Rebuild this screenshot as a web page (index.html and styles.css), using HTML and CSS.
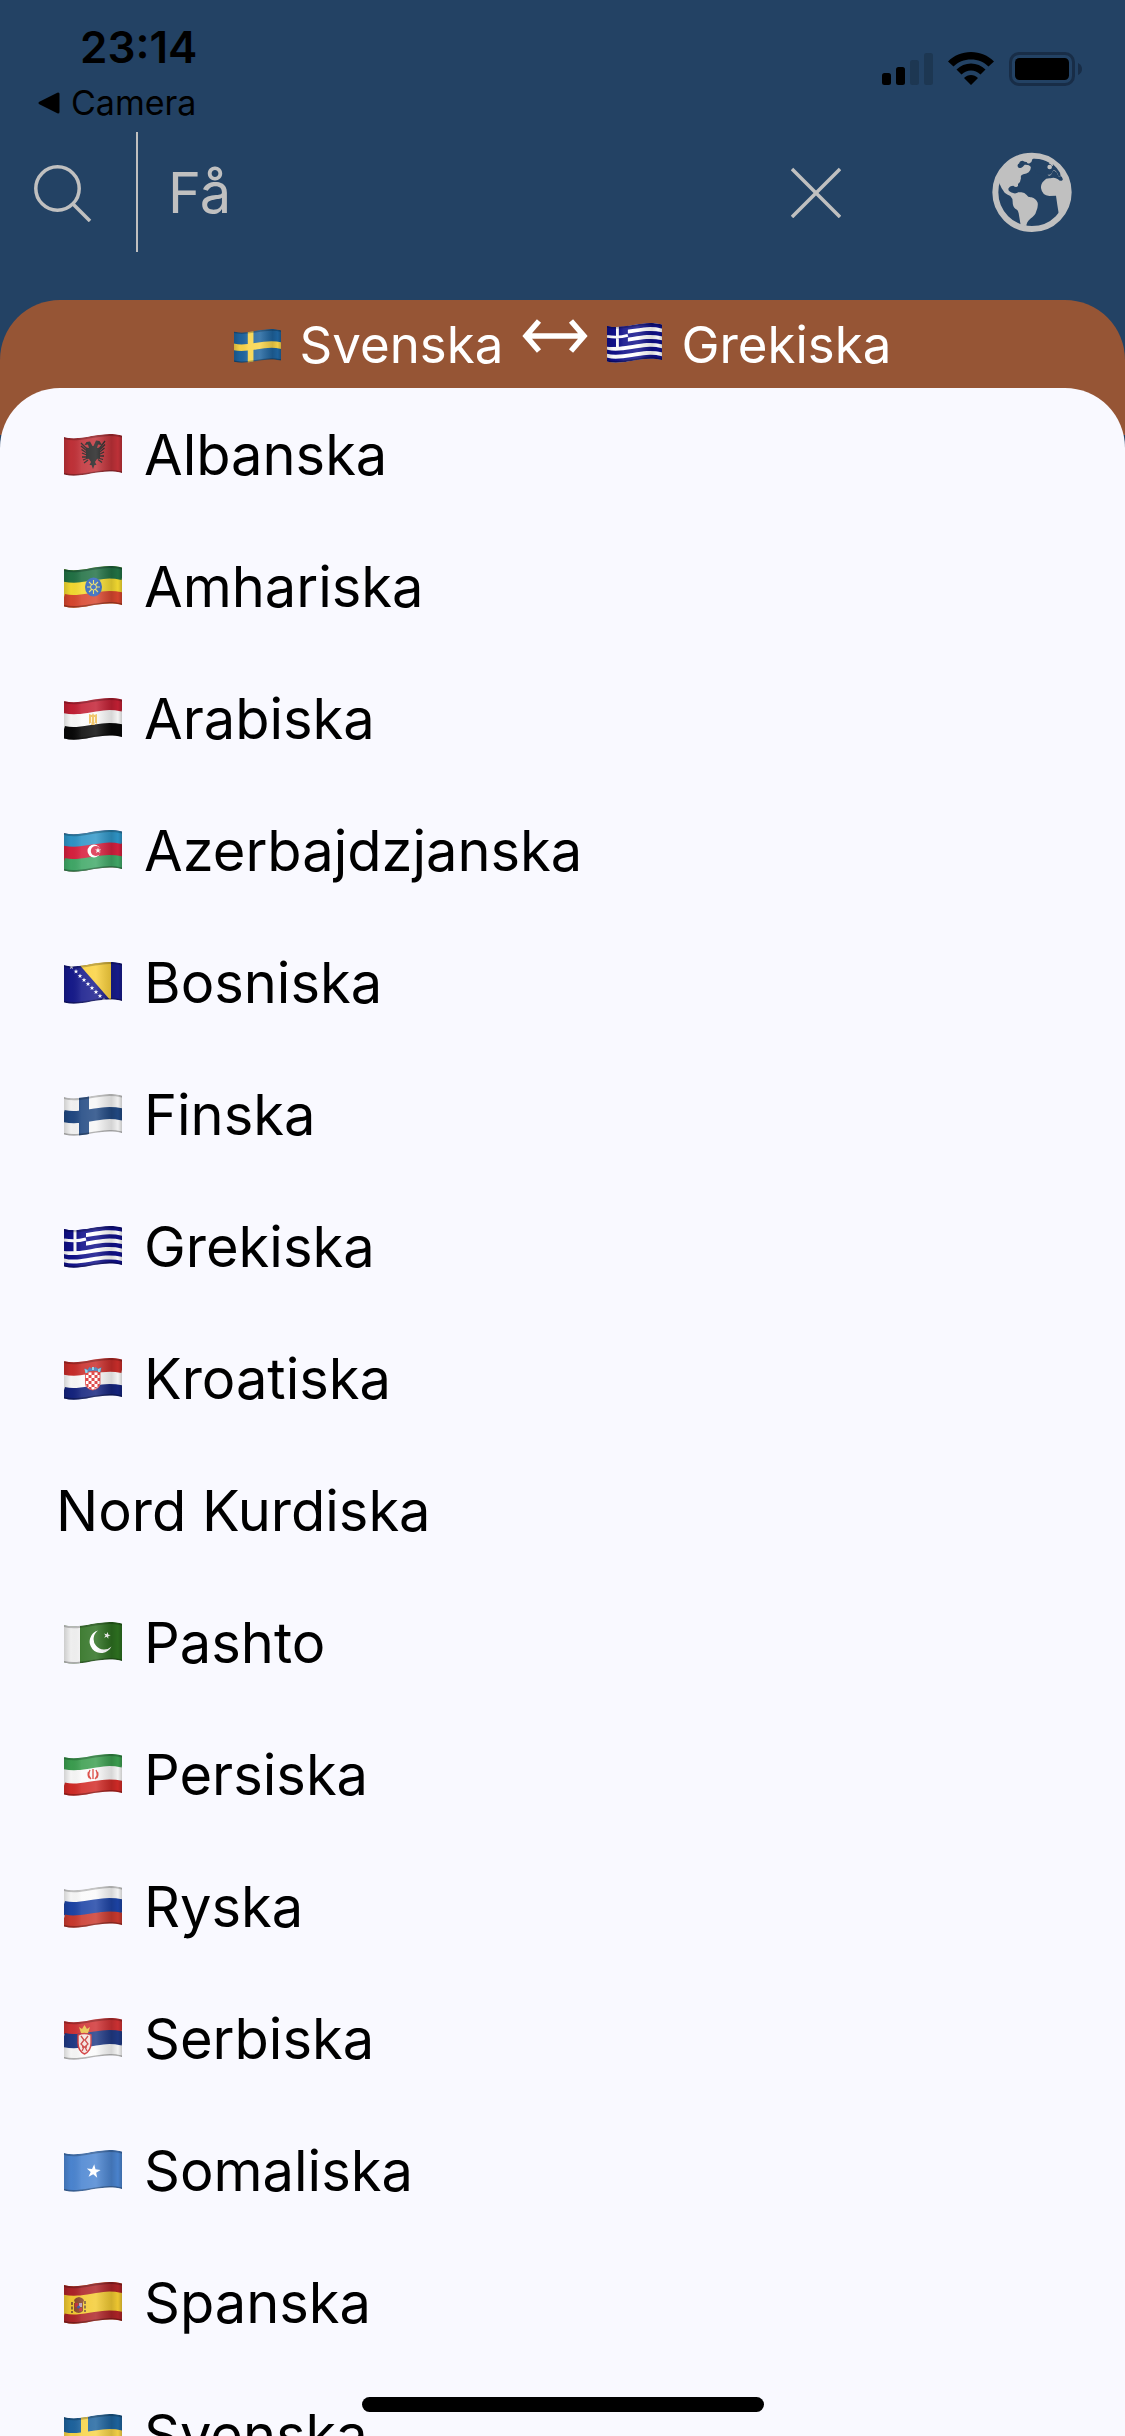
FILE: index.html
```html
<!DOCTYPE html>
<html lang="sv">
<head>
<meta charset="utf-8">
<meta name="viewport" content="width=device-width, initial-scale=1">
<title>Lexikon</title>
<link rel="stylesheet" href="styles.css">
</head>
<body>
<svg class="defs" aria-hidden="true">
  <defs>
    <path id="cloth" d="M0 3C18 8 36 -4 58 1.500V39C36 33.500 18 45.500 0 40.500Z"/>
    <clipPath id="clip"><use href="#cloth"/></clipPath>
    <path id="wave" d="M-1 2.700L0 3C18 8 36 -4 58 1.500L59 1.700" fill="none"/>
    <linearGradient id="fold">
      <stop offset="0" stop-color="#000" stop-opacity=".16"/>
      <stop offset=".12" stop-color="#000" stop-opacity=".02"/>
      <stop offset=".3" stop-color="#fff" stop-opacity=".1"/>
      <stop offset=".55" stop-color="#fff" stop-opacity=".16"/>
      <stop offset=".82" stop-color="#000" stop-opacity=".14"/>
      <stop offset=".93" stop-color="#000" stop-opacity=".03"/>
      <stop offset="1" stop-color="#000" stop-opacity=".2"/>
    </linearGradient>
    <g id="shade">
      <use href="#cloth" fill="url(#fold)"/>
      <use href="#wave" y="1" stroke="#000" stroke-opacity=".22" stroke-width="2"/>
      <use href="#wave" y="37" stroke="#000" stroke-opacity=".28" stroke-width="2"/>
    </g>
    <path id="star" d="M0 -5L1.200 -1.600H4.800L1.900 .6L3 4L0 1.900L-3 4L-1.900 .6L-4.800 -1.600H-1.200Z"/>

    <symbol id="al" viewBox="0 0 58 42"><g clip-path="url(#clip)">
      <use href="#cloth" fill="#c23239"/>
      <path fill="#222" d="M28.500 12L26 7.500L22.500 8L20.500 11L24 10.500L25 14L22 13.500V24L25 25L27 28L25.500 31L27.500 31L29 35L30.500 31L32.500 31L31 28L33 25L36 24V13.500L33 14L34 10.500L38 11L35.500 7L32 6.500L29.500 12Z"/>
      <path fill="none" stroke="#222" stroke-width="1.300" d="M17 9l6 6M17 12l6 5M17.500 15.500l6 4M18 19l6 2.500M18 23h6M19 26l5-2M20 29l4-3M41 7l-6 8M41 10.500l-6 6M40.500 14l-6 5M40 18l-6 3M40 22h-6M39 25.500l-5-1.500M38 28.500l-4-3"/>
      <use href="#shade"/></g></symbol>

    <symbol id="et" viewBox="0 0 58 42"><g clip-path="url(#clip)">
      <use href="#cloth" fill="#f5db31"/>
      <use href="#wave" y="5" stroke="#227245" stroke-width="15"/>
      <use href="#wave" y="32" stroke="#d9472f" stroke-width="14"/>
      <ellipse cx="29.500" cy="21" rx="8.500" ry="9.500" fill="#2c62bb"/>
      <path stroke="#e8dc5a" stroke-width="1.100" fill="none" d="M29.500 14v4M29.500 24v4M23 21h4M32 21h4M25 16l3 3M34 16l-3 3M25 26l3-3M34 26l-3-3"/>
      <circle cx="29.500" cy="21" r="3" fill="none" stroke="#e8dc5a"/>
      <use href="#shade"/></g></symbol>

    <symbol id="eg" viewBox="0 0 58 42"><g clip-path="url(#clip)">
      <use href="#cloth" fill="#fafafa"/>
      <use href="#wave" y="5" stroke="#c32034" stroke-width="14"/>
      <use href="#wave" y="32" stroke="#080808" stroke-width="14"/>
      <path fill="#efbd55" d="M25 16l3 1 1-2 1 2 3-1v10l-3-2 1 3h-4l1-3-3 2z"/>
      <path stroke="#fff" stroke-width=".8" fill="none" d="M27.500 19v5M30.500 19v5"/>
      <use href="#shade"/></g></symbol>

    <symbol id="az" viewBox="0 0 58 42"><g clip-path="url(#clip)">
      <use href="#cloth" fill="#d8213f"/>
      <use href="#wave" y="5" stroke="#2f96c8" stroke-width="15"/>
      <use href="#wave" y="32" stroke="#41a968" stroke-width="14"/>
      <circle cx="30" cy="21" r="6.500" fill="#fff"/><circle cx="31.800" cy="21" r="5" fill="#db2d49"/>
      <use href="#star" transform="translate(34 20.500) scale(.62)" fill="#fff"/>
      <use href="#shade"/></g></symbol>

    <symbol id="ba" viewBox="0 0 58 42"><g clip-path="url(#clip)">
      <use href="#cloth" fill="#171b8c"/>
      <path fill="#fad13c" d="M13 0H47V39Z"/>
      <g fill="#fff"><use href="#star" transform="translate(7.500 5) scale(.5)"/><use href="#star" transform="translate(12 9.500) scale(.5)"/><use href="#star" transform="translate(16 14) scale(.5)"/><use href="#star" transform="translate(20 18) scale(.5)"/><use href="#star" transform="translate(24 22) scale(.5)"/><use href="#star" transform="translate(28 26) scale(.5)"/><use href="#star" transform="translate(32 30) scale(.5)"/><use href="#star" transform="translate(36 34) scale(.5)"/><use href="#star" transform="translate(40 38) scale(.5)"/></g>
      <use href="#shade"/></g></symbol>

    <symbol id="fi" viewBox="0 0 58 42"><g clip-path="url(#clip)">
      <use href="#cloth" fill="#f6f6f6"/>
      <use href="#wave" y="19" stroke="#214983" stroke-width="12"/>
      <path fill="#214983" d="M15 0H25V42H15z"/>
      <use href="#shade"/></g></symbol>

    <symbol id="gr" viewBox="0 0 58 42"><g clip-path="url(#clip)">
      <use href="#cloth" fill="#fff"/>
      <g stroke="#10108a" stroke-width="4.300">
        <use href="#wave" y="2"/><use href="#wave" y="10.400"/><use href="#wave" y="18.800"/><use href="#wave" y="27.200"/><use href="#wave" y="35.600"/>
      </g>
      <path fill="#10108a" d="M0 0H22V23Q10 26 0 25z"/>
      <path stroke="#fff" stroke-width="3" fill="none" d="M11 3V26M0 14Q12 16 22 13"/>
      <use href="#shade"/></g></symbol>

    <symbol id="hr" viewBox="0 0 58 42"><g clip-path="url(#clip)">
      <use href="#cloth" fill="#fafafa"/>
      <use href="#wave" y="5" stroke="#c92d2a" stroke-width="17"/>
      <use href="#wave" y="33" stroke="#15247f" stroke-width="14"/>
      <path fill="#fff" stroke="#d92e2e" stroke-width=".8" d="M21.500 14H36V26Q35 31 28.800 32Q22 31 21.500 26z"/>
      <path fill="#d92e2e" d="M21.500 14h3v3h-3zM27.500 14h3v3h-3zM33.500 14H36v3h-2.500zM24.500 17h3v3h-3zM30.500 17h3v3h-3zM21.500 20h3v3h-3zM27.500 20h3v3h-3zM33.500 20H36v3h-2.500zM24.500 23h3v3h-3zM30.500 23h3v3h-3zM22 26h2.500v3h-1.500zM27.500 26h3v3h-3zM33.500 26H36l-1.500 3h-1zM24.500 29h3v2.500l-2-.5zM30.500 29h3l-3 2z"/>
      <path fill="#3b78b8" d="M20.500 10l3 2 2-3 3 2 3-2 3 2 3-2-1 5q-8-3-15 1z"/>
      <path fill="#7fd3e8" d="M20.500 11l3 1v3h-2zM28 9h2v3h-2zM34 11l3-1-1 4h-2z"/>
      <use href="#shade"/></g></symbol>

    <symbol id="pk" viewBox="0 0 58 42"><g clip-path="url(#clip)">
      <use href="#cloth" fill="#2d7020"/>
      <path fill="#f4f4f4" d="M0 0H16V42H0z"/>
      <path fill="#fff" d="M34 8.500A11.500 11.500 0 1 0 47.500 24.500A10.500 10.500 0 1 1 34 8.500Z"/>
      <use href="#star" transform="translate(43 13.500) rotate(15) scale(.72)" fill="#fff"/>
      <use href="#shade"/></g></symbol>

    <symbol id="ir" viewBox="0 0 58 42"><g clip-path="url(#clip)">
      <use href="#cloth" fill="#fafafa"/>
      <use href="#wave" y="5" stroke="#3c9f50" stroke-width="14"/>
      <use href="#wave" y="32.500" stroke="#d22b27" stroke-width="14"/>
      <path fill="none" stroke="#d83a32" stroke-width="1.400" d="M29 15v10M26 16q-3 5 1 9M32 16q3 5-1 9M24.500 18q-1 4 1 6M33.500 18q1 4-1 6"/>
      <use href="#shade"/></g></symbol>

    <symbol id="ru" viewBox="0 0 58 42"><g clip-path="url(#clip)">
      <use href="#cloth" fill="#fafafa"/>
      <use href="#wave" y="19" stroke="#1d44a6" stroke-width="14"/>
      <use href="#wave" y="33" stroke="#cb3a2f" stroke-width="15"/>
      <use href="#shade"/></g></symbol>

    <symbol id="rs" viewBox="0 0 58 42"><g clip-path="url(#clip)">
      <use href="#cloth" fill="#fafafa"/>
      <use href="#wave" y="5" stroke="#d03234" stroke-width="16"/>
      <use href="#wave" y="19" stroke="#203a86" stroke-width="14"/>
      <path fill="#e9c24c" d="M15 9l3 2 2.500-4 2.500 4 3-2-2 6h-7z"/>
      <path fill="#f4e4e0" stroke="#d03234" stroke-width="1.400" d="M14 17q6-3 13 0V25q0 8-6.500 11Q14 33 14 25z"/>
      <path fill="none" stroke="#c93a38" stroke-width="1.300" d="M17 18l3 4-3 4 3 3-2 4M24 18l-3 4 3 4-3 3 2 4M18 29h5"/>
      <use href="#shade"/></g></symbol>

    <symbol id="so" viewBox="0 0 58 42"><g clip-path="url(#clip)">
      <use href="#cloth" fill="#4c86d2"/>
      <use href="#star" transform="translate(29.500 21.500) rotate(6) scale(1.450)" fill="#fff"/>
      <use href="#shade"/></g></symbol>

    <symbol id="es" viewBox="0 0 58 42"><g clip-path="url(#clip)">
      <use href="#cloth" fill="#f3cb32"/>
      <use href="#wave" y="3.500" stroke="#ae2428" stroke-width="12"/>
      <use href="#wave" y="34.500" stroke="#ae2428" stroke-width="12"/>
      <path fill="#8c4a2c" d="M10 18l2-2 3-1 3 1 2 2-1 3h-8zM10 21h9v8q-4 4-9 0z"/>
      <path fill="#b9a0b8" d="M15 21h3v4h-3z"/><path fill="#c33238" d="M11 21h3v4h-3zM15 26h3v3h-3z"/><circle cx="14.500" cy="25" r="1.500" fill="#3a57a5"/>
      <path stroke="#6c4a34" stroke-width="1.600" stroke-dasharray="3 1.500" d="M8 20V31M21 19V30"/>
      <use href="#shade"/></g></symbol>

    <symbol id="se" viewBox="0 0 58 42"><g clip-path="url(#clip)">
      <use href="#cloth" fill="#1e649f"/>
      <use href="#wave" y="19" stroke="#f8d448" stroke-width="8"/>
      <path fill="#f8d448" d="M17 0H24V42H17z"/>
      <use href="#shade"/></g></symbol>
  </defs>
</svg>

<div class="app">
  <header class="top">
    <div class="status">
      <div class="status-left">
        <span class="time">23:14</span>
        <a class="back" href="#">
          <svg width="24" height="24" viewBox="0 0 24 24" aria-hidden="true"><path d="M3 12L21 3V21Z" stroke="#000" stroke-width="3" stroke-linejoin="round"/></svg>
          Camera
        </a>
      </div>
      <div class="status-right">
        <svg width="51" height="34" viewBox="0 0 51 34" aria-label="Signal"><rect y="21" width="9" height="12" rx="2.500"/><rect x="14" y="15" width="9" height="18" rx="2.500"/><g fill="#1d3752"><rect x="28" y="8" width="9" height="25" rx="2.500"/><rect x="42" y="1" width="9" height="32" rx="2.500"/></g></svg>
        <svg width="46" height="34" viewBox="0 0 46 34" aria-label="Wi-Fi"><path d="M23 0C32 0 40 3.500 46 9.500L40.500 14.500C36 10 30 7.500 23 7.500S10 10 5.500 14.500L0 9.500C6 3.500 14 0 23 0ZM23 11.500C28.500 11.500 33.500 13.800 37.500 17.500L32.500 22.500C29.500 20 26.500 18.600 23 18.600S16.500 20 13.500 22.500L8.500 17.500C12.500 13.800 17.500 11.500 23 11.500ZM23 23C25.500 23 28 24.200 30 26L23 33L16 26C18 24.200 20.500 23 23 23Z"/></svg>
        <svg width="73" height="34" viewBox="0 0 73 34" aria-label="Batteri"><rect x="1.500" y="1.500" width="63" height="31" rx="8.500" fill="none" stroke="#182d47" stroke-width="3"/><rect x="6" y="6" width="54" height="22" rx="4.500"/><path fill="#182d47" d="M69 11Q73 13 73 17T69 23Z"/></svg>
      </div>
    </div>
    <form class="search">
      <button class="find" type="submit" aria-label="Sök">
        <svg width="58" height="60" viewBox="0 -2 58 60"><g fill="none" stroke="currentColor" stroke-width="3.500"><circle cx="23.500" cy="24.500" r="21.700"/><path d="M39 40L56 57"/></g></svg>
      </button>
      <input class="query" type="text" value="Få" aria-label="Sökord">
      <button class="icon" type="reset" aria-label="Rensa">
        <svg width="50" height="52" viewBox="0 -2 50 52"><path fill="none" stroke="currentColor" stroke-width="3.500" d="M1 1L49 49M49 1L1 49"/></svg>
      </button>
      <button class="icon" type="button" aria-label="Språk">
        <svg width="80" height="80" viewBox="0 0 240 240"><g fill="currentColor"><circle cx="120" cy="121" r="110" fill="none" stroke="currentColor" stroke-width="18"/><path d="M20 88L23 96Q28 110 38 122Q45 127 55 132Q62 138 62 150Q62 164 70 170Q79 174 80 184L86 220L103 222Q103 210 115 200Q130 190 132 180Q139 165 137 152Q132 140 118 136Q108 137 104 129Q98 121 88 121H78Q74 125 66 124Q48 120 49 110Q53 101 64 101Q72 108 78 102V96Q86 90 87 78Q84 70 94 67Q104 65 110 61Q118 53 116 44Q112 37 98 38Q92 45 88 47Q80 50 78 45Q74 38 82 34Q82 26 92 26Q98 30 104 30Q106 36 113 34Q120 31 121 22L130 12L80 14L40 45L16 80Z"/><path d="M147 108Q146 95 156 86Q162 78 175 79Q188 74 198 82Q205 90 212 84Q214 75 206 72Q200 78 198 70Q196 60 188 57Q180 54 180 64Q176 74 168 70Q164 62 171 60Q182 60 184 53Q188 45 180 38Q175 28 167 30L190 30L215 60L235 110L230 160L200 184Q196 160 192 131Q180 131 172 132Q150 130 147 108Z"/></g><path fill="#234264" d="M124 20Q150 19 172 32Q164 38 165 48L166 52Q176 54 182 46Q185 40 182 36Q196 48 204 62L206 72L200 75Q196 60 190 56Q182 52 180 62Q178 70 170 68H150L130 60Z"/><circle cx="173" cy="45" r="7" fill="currentColor"/></svg>
      </button>
    </form>
  </header>

  <main class="panel">
    <button class="pair" type="button">
      <svg class="flag" width="47" height="34" aria-hidden="true"><use href="#se"/></svg>
      <span>Svenska</span>
      <svg class="arrow" width="66" height="44" viewBox="0 0 66 44" aria-hidden="true"><path fill="none" stroke="#fff" stroke-width="5.500" d="M3 17H63M17 2L4 17L17 32M49 2L62 17L49 32"/></svg>
      <svg class="flag" width="55" height="40" aria-hidden="true"><use href="#gr"/></svg>
      <span>Grekiska</span>
    </button>
    <ul class="sheet">
      <li><button class="row" type="button"><svg class="flag" width="58" height="42" aria-hidden="true"><use href="#al"/></svg>Albanska</button></li>
      <li><button class="row" type="button"><svg class="flag" width="58" height="42" aria-hidden="true"><use href="#et"/></svg>Amhariska</button></li>
      <li><button class="row" type="button"><svg class="flag" width="58" height="42" aria-hidden="true"><use href="#eg"/></svg>Arabiska</button></li>
      <li><button class="row" type="button"><svg class="flag" width="58" height="42" aria-hidden="true"><use href="#az"/></svg>Azerbajdzjanska</button></li>
      <li><button class="row" type="button"><svg class="flag" width="58" height="42" aria-hidden="true"><use href="#ba"/></svg>Bosniska</button></li>
      <li><button class="row" type="button"><svg class="flag" width="58" height="42" aria-hidden="true"><use href="#fi"/></svg>Finska</button></li>
      <li><button class="row" type="button"><svg class="flag" width="58" height="42" aria-hidden="true"><use href="#gr"/></svg>Grekiska</button></li>
      <li><button class="row" type="button"><svg class="flag" width="58" height="42" aria-hidden="true"><use href="#hr"/></svg>Kroatiska</button></li>
      <li><button class="row" type="button">Nord Kurdiska</button></li>
      <li><button class="row" type="button"><svg class="flag" width="58" height="42" aria-hidden="true"><use href="#pk"/></svg>Pashto</button></li>
      <li><button class="row" type="button"><svg class="flag" width="58" height="42" aria-hidden="true"><use href="#ir"/></svg>Persiska</button></li>
      <li><button class="row" type="button"><svg class="flag" width="58" height="42" aria-hidden="true"><use href="#ru"/></svg>Ryska</button></li>
      <li><button class="row" type="button"><svg class="flag" width="58" height="42" aria-hidden="true"><use href="#rs"/></svg>Serbiska</button></li>
      <li><button class="row" type="button"><svg class="flag" width="58" height="42" aria-hidden="true"><use href="#so"/></svg>Somaliska</button></li>
      <li><button class="row" type="button"><svg class="flag" width="58" height="42" aria-hidden="true"><use href="#es"/></svg>Spanska</button></li>
      <li><button class="row" type="button"><svg class="flag" width="58" height="42" aria-hidden="true"><use href="#se"/></svg>Svenska</button></li>
    </ul>
  </main>
  <div class="home"></div>
</div>
</body>
</html>
```
FILE: styles.css
```css
* {
  box-sizing: border-box;
}

body {
  margin: 0;
  font-family: Inter, "Liberation Sans", sans-serif;
  background: #234264;
  color: #000;
}

button,
input {
  margin: 0;
  padding: 0;
  border: 0;
  background: none;
  color: inherit;
  font: inherit;
}

svg {
  display: block;
  flex: none;
}

.defs {
  position: absolute;
  width: 0;
  height: 0;
}

.app {
  display: flex;
  flex-direction: column;
  height: 100vh;
  overflow: hidden;
}

.top {
  flex: none;
  padding-bottom: 48px;
}

/* Status bar */
.status {
  display: flex;
  justify-content: space-between;
  padding: 23px 43px 9px 37px;
}

.status-left {
  display: flex;
  flex-direction: column;
  gap: 12px;
}

.time {
  padding-left: 43px;
  font-size: 44px;
  font-weight: 600;
  line-height: 48px;
}

.back {
  display: flex;
  align-items: center;
  gap: 10px;
  color: #000;
  font-size: 34px;
  line-height: 40px;
  text-decoration: none;
}

.status-right {
  display: flex;
  align-items: center;
  gap: 15px;
  height: 92px;
}

/* Search field */
.search {
  display: flex;
  align-items: center;
  height: 120px;
  padding-right: 53px;
  color: #c0c0c0;
}

.find {
  display: flex;
  flex: none;
  align-items: center;
  width: 138px;
  height: 100%;
  padding-left: 34px;
  border-right: 2px solid #c0c0c0;
}

.query {
  flex: 1;
  min-width: 0;
  padding: 2px 30px 0;
  font-size: 56px;
  line-height: 72px;
  outline: 0;
}

.icon {
  flex: none;
}

.icon + .icon {
  margin-left: 151px;
}

/* Language picker */
.panel {
  display: flex;
  flex: 1;
  flex-direction: column;
  min-height: 0;
  border-radius: 60px 60px 0 0;
  background: linear-gradient(#965535 135px, #234264 135px);
}

.pair {
  display: flex;
  flex: none;
  align-items: baseline;
  justify-content: center;
  gap: 19px;
  height: 88px;
  color: #fff;
  font-size: 51px;
  line-height: 90px;
}

.sheet {
  flex: 1;
  min-height: 0;
  margin: 0;
  padding: 0;
  overflow-y: auto;
  border-radius: 60px 60px 0 0;
  background: #f9f9ff;
  list-style: none;
  scrollbar-width: none;
}

.row {
  display: flex;
  align-items: center;
  width: 100%;
  height: 132px;
  padding: 2px 0 0 56px;
  font-size: 56px;
  line-height: 72px;
  text-align: left;
}

.row .flag {
  margin: 0 22px 0 8px;
}

.home {
  position: fixed;
  bottom: 24px;
  left: 50%;
  width: 402px;
  height: 15px;
  border-radius: 8px;
  background: #000;
  transform: translateX(-50%);
}
```
